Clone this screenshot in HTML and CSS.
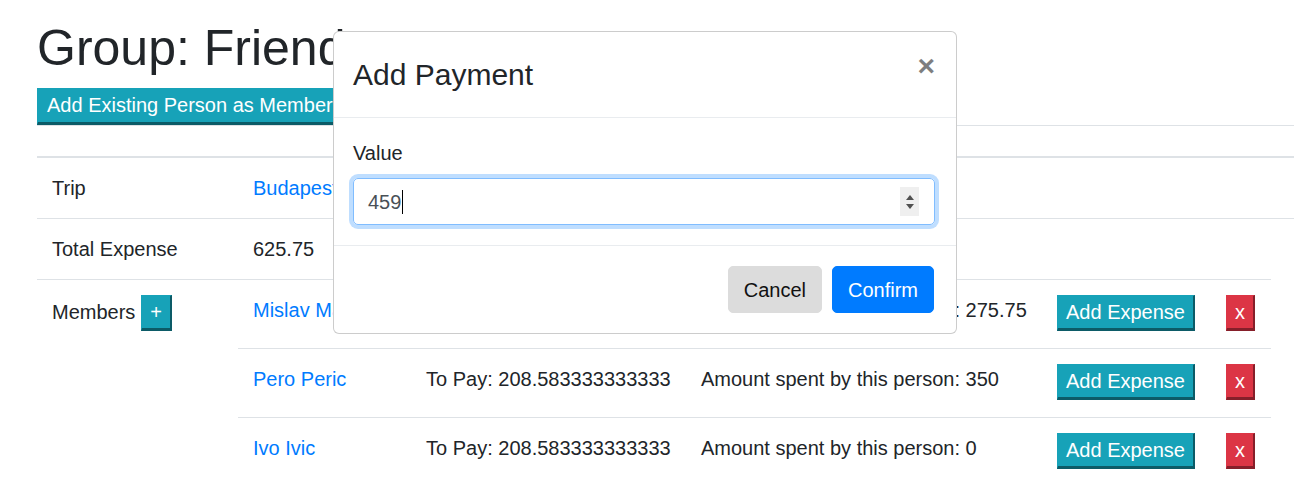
FILE: index.html
```html
<!DOCTYPE html>
<html lang="en">
<head>
<meta charset="utf-8">
<title>Group: Friends</title>
<link rel="stylesheet" href="styles.css">
</head>
<body>
<div class="page">
  <h1 class="title">Group: Friends</h1>
  <button class="btn3d btn-teal btn-add-member" type="button">Add Existing Person as Member</button>
  <table class="grid">
    <colgroup><col class="c-label"><col></colgroup>
    <thead><tr><th></th><th></th></tr></thead>
    <tbody>
      <tr><td>Trip</td><td><a class="link" href="#">Budapest</a></td></tr>
      <tr><td>Total Expense</td><td>625.75</td></tr>
      <tr>
        <td>Members<button class="btn3d btn-teal btn-plus" type="button">+</button></td>
        <td class="nest-cell">
          <table class="members">
            <colgroup><col class="m1"><col class="m2"><col class="m3"><col class="m4"><col class="m5"></colgroup>
            <tbody>
              <tr>
                <td><a class="link" href="#">Mislav Markovic</a></td>
                <td>To Pay: 208.583333333333</td>
                <td>Amount spent by this person: 275.75</td>
                <td><button class="btn3d btn-teal cell-btn" type="button">Add Expense</button></td>
                <td><button class="btn3d btn-red cell-btn" type="button">x</button></td>
              </tr>
              <tr>
                <td><a class="link" href="#">Pero Peric</a></td>
                <td>To Pay: 208.583333333333</td>
                <td>Amount spent by this person: 350</td>
                <td><button class="btn3d btn-teal cell-btn" type="button">Add Expense</button></td>
                <td><button class="btn3d btn-red cell-btn" type="button">x</button></td>
              </tr>
              <tr>
                <td><a class="link" href="#">Ivo Ivic</a></td>
                <td>To Pay: 208.583333333333</td>
                <td>Amount spent by this person: 0</td>
                <td><button class="btn3d btn-teal cell-btn" type="button">Add Expense</button></td>
                <td><button class="btn3d btn-red cell-btn" type="button">x</button></td>
              </tr>
            </tbody>
          </table>
        </td>
      </tr>
    </tbody>
  </table>
</div>

<div class="modal" role="dialog" aria-labelledby="modal-title">
  <div class="modal-header">
    <h4 class="modal-title" id="modal-title">Add Payment</h4>
    <button class="close" type="button" aria-label="Close">×</button>
  </div>
  <div class="modal-body">
    <label class="label">Value</label>
    <div class="field">
      <span class="field-value">459</span><span class="caret"></span>
      <span class="spin"><span class="tri-up"></span><span class="tri-down"></span></span>
    </div>
  </div>
  <div class="modal-footer">
    <button class="btn btn-cancel" type="button">Cancel</button>
    <button class="btn btn-confirm" type="button">Confirm</button>
  </div>
</div>
</body>
</html>
```
FILE: styles.css
```css
* { box-sizing: border-box; }
html { overflow: hidden; }
body {
  margin: 0;
  font-family: "Liberation Sans", Arial, sans-serif;
  font-size: 20px;
  line-height: 1.5;
  color: #212529;
  background: #fff;
}
.page { padding: 18px 0 0 37px; }
.title {
  margin: 0 0 10px;
  font-size: 50px;
  font-weight: 400;
  line-height: 1.2;
}
.link { color: #007bff; text-decoration: none; }

.btn3d {
  font-family: inherit;
  font-size: 20px;
  line-height: 24px;
  padding: 4px 8px;
  border-style: solid;
  border-width: 1px 2px 3px 1px;
  border-radius: 0;
  color: #fff;
  cursor: pointer;
}
.btn-teal {
  background: #17a2b8;
  border-color: #17a2b8 #0c5b67 #0c5b67 #17a2b8;
}
.btn-red {
  background: #dc3545;
  border-color: #dc3545 #861f2a #861f2a #dc3545;
}
.btn-add-member {
  display: block;
  line-height: 25px;
  padding: 4px 8px 4px 9px;
}
.btn-plus { margin-left: 6px; }
.cell-btn { vertical-align: top; margin-bottom: 2px; }

.grid {
  border-collapse: collapse;
  table-layout: fixed;
  width: 1257px;
}
.grid th, .grid td {
  padding: 15px;
  border-top: 1px solid #dee2e6;
  text-align: left;
  vertical-align: top;
  white-space: nowrap;
}
.grid thead th { border-bottom: 2px solid #dee2e6; }
.c-label { width: 201px; }
.grid td.nest-cell { padding: 0; border-top: 0; }

.members {
  border-collapse: collapse;
  table-layout: fixed;
  width: 1033px;
  margin-top: -1px;
}
.m1 { width: 173px; }
.m2 { width: 275px; }
.m3 { width: 356px; }
.m4 { width: 169px; }
.m5 { width: 60px; }

/* modal */
.modal {
  position: absolute;
  top: 31px;
  left: 333px;
  width: 624px;
  background: #fff;
  border: 1px solid rgba(0, 0, 0, 0.2);
  border-radius: 6px;
}
.modal-header {
  display: flex;
  align-items: flex-start;
  justify-content: space-between;
  padding: 20px 21px 20px 19px;
  border-bottom: 1px solid #e9ecef;
}
.modal-title {
  margin: 0;
  font-size: 30px;
  font-weight: 400;
  line-height: 45px;
}
.close {
  font-family: inherit;
  font-size: 30px;
  font-weight: 700;
  line-height: 1;
  color: #000;
  opacity: 0.5;
  background: none;
  border: 0;
  padding: 0;
  margin-top: -1px;
  cursor: pointer;
}
.modal-body { padding: 20px 21px 20px 19px; }
.label {
  display: block;
  line-height: 30px;
  margin-bottom: 10px;
}
.field {
  display: flex;
  align-items: center;
  height: 47px;
  padding: 7.5px 15px 7.5px 14px;
  border: 1px solid #80bdff;
  border-radius: 5px;
  box-shadow: 0 0 0 4px rgba(0, 123, 255, 0.25);
  color: #495057;
}
.caret {
  display: inline-block;
  width: 1px;
  height: 24px;
  background: #000;
  margin-left: 1px;
}
.spin {
  margin-left: auto;
  width: 19px;
  height: 29px;
  background: #efefef;
  display: flex;
  flex-direction: column;
  align-items: center;
  justify-content: center;
  gap: 4px;
}
.tri-up, .tri-down {
  width: 0;
  height: 0;
  border-left: 4px solid transparent;
  border-right: 4px solid transparent;
}
.tri-up { border-bottom: 5px solid #505050; }
.tri-down { border-top: 5px solid #505050; }

.modal-footer {
  display: flex;
  justify-content: flex-end;
  align-items: center;
  padding: 15px 17px 15px 15px;
  border-top: 1px solid #e9ecef;
}
.btn {
  font-family: inherit;
  font-size: 20px;
  line-height: 30px;
  padding: 7.5px 15px;
  margin: 5px;
  border: 1px solid transparent;
  border-radius: 5px;
  cursor: pointer;
}
.btn-cancel { background: #dcdcdc; border-color: #dcdcdc; color: #111; }
.btn-confirm { background: #007bff; border-color: #007bff; color: #fff; }
```
